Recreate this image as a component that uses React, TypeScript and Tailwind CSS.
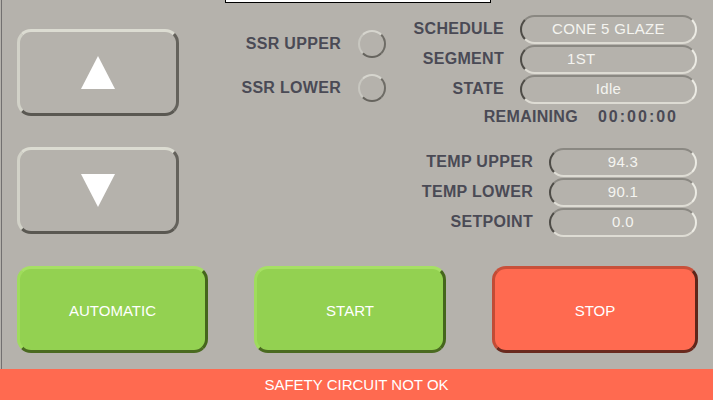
const font = { fontFamily: '"Liberation Sans", Arial, sans-serif' };

function NavButton({ dir }: { dir: "up" | "down" }) {
  return (
    <button className="flex h-[87px] w-[162px] items-center justify-center rounded-[14px] border-[3px] border-t-[#dcdcd2] border-l-[#d2d2c8] border-r-[#64625c] border-b-[#5a5852] bg-[#b5b2ac]">
      <svg width="34" height="33" viewBox="0 0 34 33">
        {dir === "up" ? (
          <polygon points="17,0 34,33 0,33" fill="#ffffff" />
        ) : (
          <polygon points="0,0 34,0 17,33" fill="#ffffff" />
        )}
      </svg>
    </button>
  );
}

function Label({ children }: { children: React.ReactNode }) {
  return (
    <span className="text-[16px] font-bold tracking-[0.3px] text-[#4a4a55] whitespace-nowrap">
      {children}
    </span>
  );
}

function Field({ value, w, className = "" }: { value: string; w: string; className?: string }) {
  return (
    <div
      className={`flex h-[29px] items-center justify-center rounded-full border-2 border-t-[#8a8882] border-l-[#4e4c47] border-r-[#ecebe4] border-b-[#dedcd4] text-[15px] tracking-[0.3px] text-[#f4f4f0] ${w} ${className}`}
    >
      {value}
    </div>
  );
}

function Led() {
  return (
    <div className="h-[28px] w-[28px] rounded-full border-2 border-t-[#d6d5ce] border-l-[#c8c7c0] border-r-[#6e6c66] border-b-[#66645e]" />
  );
}

function ActionButton({ label, w, color }: { label: string; w: string; color: "green" | "red" }) {
  const c =
    color === "green"
      ? "bg-[#93d151] border-t-[#a6e064] border-l-[#9fdc5c] border-r-[#45661c] border-b-[#4a6a20]"
      : "bg-[#ff6a50] border-t-[#c9503a] border-l-[#c24c36] border-r-[#5e261a] border-b-[#6a2a1e]";
  return (
    <button
      className={`flex h-[87px] items-center justify-center rounded-[14px] border-[3px] pt-[3px] text-[15px] text-white ${w} ${c}`}
    >
      {label}
    </button>
  );
}

export default function App() {
  return (
    <div style={font} className="relative flex h-[400px] w-[713px] flex-col overflow-hidden bg-[#b5b2ac]">
      <div className="absolute left-[225px] top-[-4px] h-[7px] w-[266px] border border-black bg-white" />

      <div className="ml-px flex h-[369px] flex-col border-l border-[#727070]">
        <div className="flex h-[266px]">
          {/* arrows */}
          <div className="ml-[15px] mt-[29px] flex flex-col gap-[31px]">
            <NavButton dir="up" />
            <NavButton dir="down" />
          </div>

          {/* ssr indicators */}
          <div className="mt-[29px] flex w-[207px] flex-col gap-[15px]">
            <div className="flex h-[29px] items-center justify-end gap-[17px]">
              <Label>SSR UPPER</Label>
              <Led />
            </div>
            <div className="flex h-[29px] items-center justify-end gap-[17px]">
              <Label>SSR LOWER</Label>
              <Led />
            </div>
          </div>

          {/* status */}
          <div className="mt-[14px] flex w-[311px] flex-col">
            <div className="flex h-[30px] items-center justify-end gap-[16px]">
              <Label>SCHEDULE</Label>
              <Field value="CONE 5 GLAZE" w="w-[177px]" />
            </div>
            <div className="flex h-[30px] items-center justify-end gap-[16px]">
              <Label>SEGMENT</Label>
              <Field value="1ST" w="w-[177px]" className="!justify-start pl-[45px]" />
            </div>
            <div className="flex h-[30px] items-center justify-end gap-[16px]">
              <Label>STATE</Label>
              <Field value="Idle" w="w-[177px]" />
            </div>
            <div className="mt-[3px] flex h-[20px] items-center justify-end gap-[20px] pr-[19px]">
              <Label>REMAINING</Label>
              <span className="text-[16px] font-bold tracking-[2px] text-[#4a4a55]">00:00:00</span>
            </div>

            <div className="mt-[20px] flex h-[30px] items-center justify-end gap-[16px]">
              <Label>TEMP UPPER</Label>
              <Field value="94.3" w="w-[148px]" />
            </div>
            <div className="flex h-[30px] items-center justify-end gap-[16px]">
              <Label>TEMP LOWER</Label>
              <Field value="90.1" w="w-[148px]" />
            </div>
            <div className="flex h-[30px] items-center justify-end gap-[16px]">
              <Label>SETPOINT</Label>
              <Field value="0.0" w="w-[148px]" />
            </div>
          </div>
        </div>

        <div className="ml-[15px] flex gap-[46px]">
          <ActionButton label="AUTOMATIC" w="w-[191px]" color="green" />
          <ActionButton label="START" w="w-[192px]" color="green" />
          <ActionButton label="STOP" w="w-[206px]" color="red" />
        </div>
      </div>

      <div className="flex h-[31px] items-center justify-center bg-[#ff6a50] pt-[2px] text-[15px] text-white">
        SAFETY CIRCUIT NOT OK
      </div>
    </div>
  );
}
